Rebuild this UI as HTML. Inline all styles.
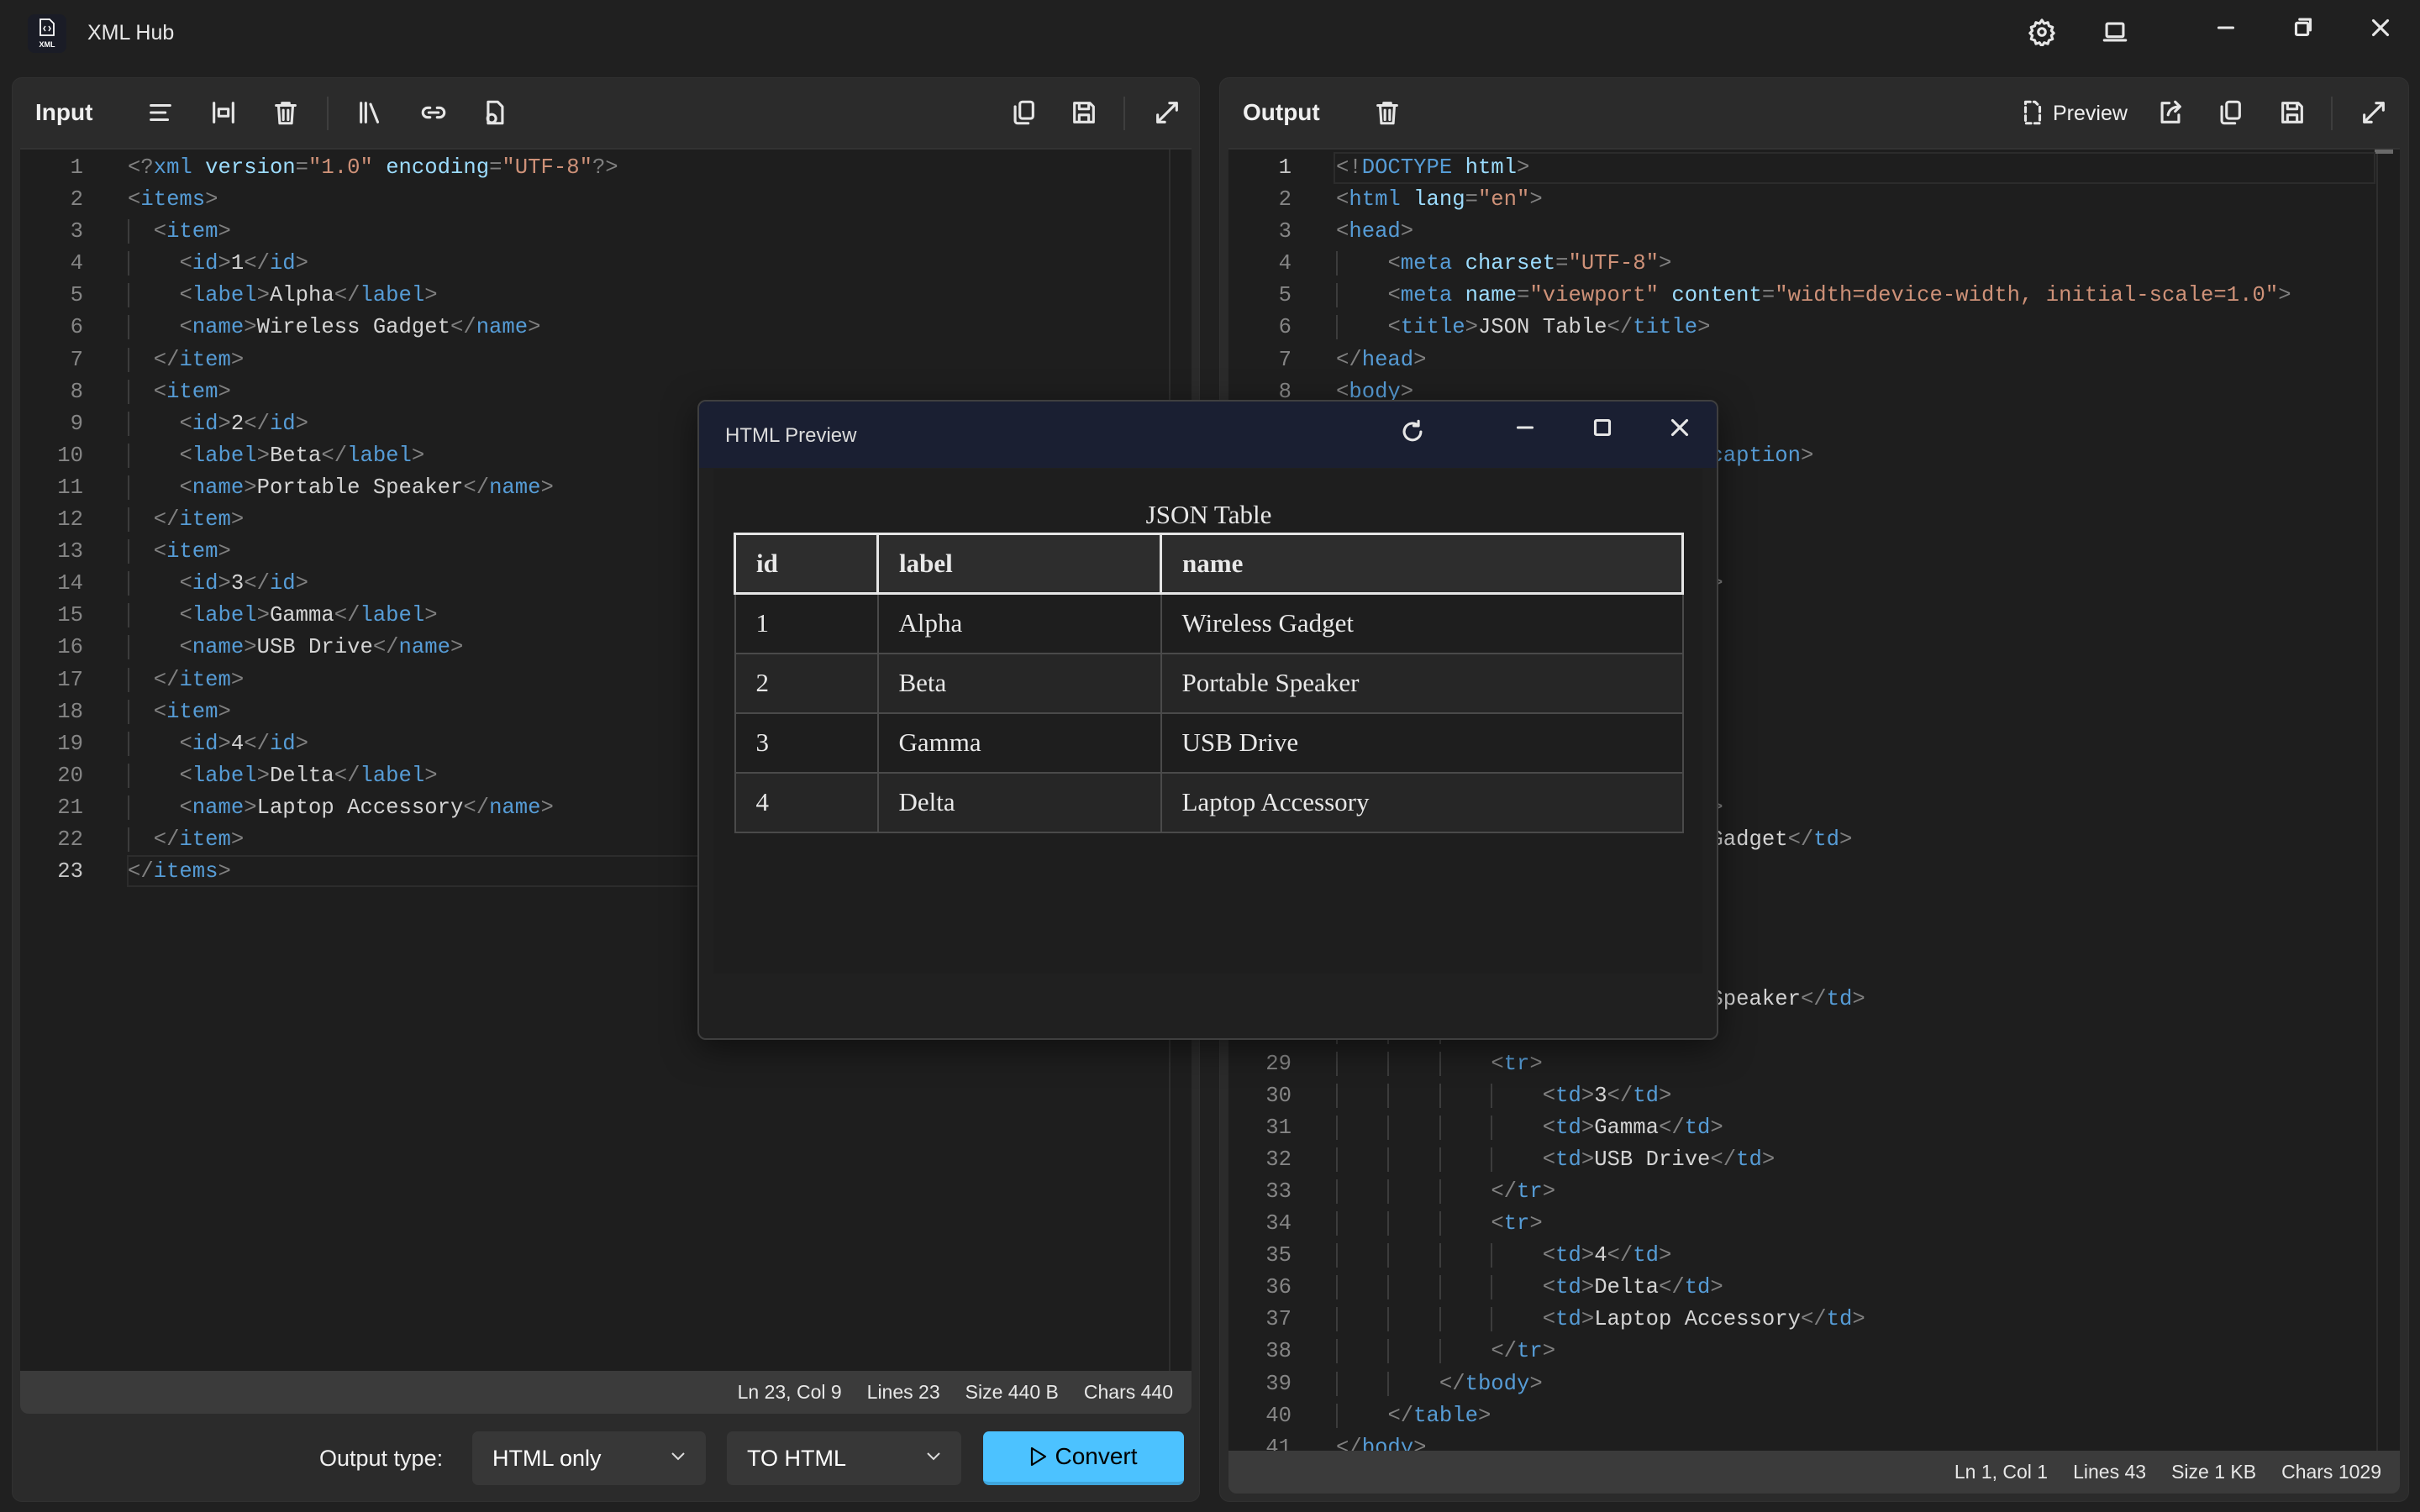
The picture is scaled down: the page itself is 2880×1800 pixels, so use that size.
<!DOCTYPE html>
<html><head><meta charset="utf-8">
<style>
*{box-sizing:border-box}
body{margin:0;width:2880px;height:1800px;background:#202020;overflow:hidden;font-family:"Liberation Sans",sans-serif;color:#e6e6e6;position:relative}
.abs{position:absolute}
.panel{position:absolute;background:#2b2b2b;border-radius:12px;border:1px solid #313131}
.ed{position:absolute;background:#1e1e1e;overflow:hidden;border-top:2px solid #333}
.code{position:absolute;top:3px;margin:0;font-family:"Liberation Mono",monospace;font-size:25.6px;line-height:38.1px;color:#d4d4d4;white-space:pre}
.ln{position:absolute;top:3px;margin:0;font-family:"Liberation Mono",monospace;font-size:25.6px;line-height:38.1px;color:#858585;text-align:right;white-space:pre}
i{font-style:normal;color:#808080}
u{text-decoration:none;color:#569cd6}
s{text-decoration:none;color:#9cdcfe}
em{font-style:normal;color:#ce9178}
g{box-shadow:inset 2px 0 0 #3c3c3c}
.status{position:absolute;background:#3b3b3b;font-size:23px;color:#e8e8e8;display:flex;justify-content:flex-end;align-items:center;gap:30px;padding-right:22px}
.ic{position:absolute;width:34px;height:34px;fill:none;stroke:#e6e6e6;stroke-width:2.2;stroke-linecap:round;stroke-linejoin:round}
.sep{position:absolute;width:2px;height:40px;background:#3e3e3e}
.dd{position:absolute;background:#373737;border-radius:7px;font-size:27px;color:#fff;padding-left:24px;display:flex;align-items:center}
.chev{position:absolute;right:24px;top:24px;width:18px;height:12px}
table{border-collapse:collapse;font-family:"Liberation Serif",serif;font-size:31px;color:#e8e8e8}
td,th{border:2px solid #4a4a4a;text-align:left;padding:0 0 0 24px;height:71px}
th{border:3px solid #e6e6e6;background:#2d2d2d}
tr.r2 td,tr.r4 td{background:#262626}
</style></head><body>

<div class="abs" style="left:33px;top:17px;width:46px;height:46px;background:#1a1c26;border-radius:8px"></div>
<svg class="abs" style="left:40px;top:20px" width="32" height="40" viewBox="0 0 32 40"><path d="M8 3h11l5 5v14H8z" fill="none" stroke="#fff" stroke-width="1.8"/><path d="M14 11l-2 3 2 3M18 11l2 3-2 3" fill="none" stroke="#fff" stroke-width="1.4"/><text x="16" y="36" fill="#fff" font-size="9" font-weight="bold" text-anchor="middle" font-family="Liberation Sans">XML</text></svg>
<div class="abs" style="left:104px;top:25px;font-size:25px;color:#e8e8e8">XML Hub</div>

<svg class="ic" style="left:2413px;top:21px" viewBox="0 0 24 24"><circle cx="12" cy="12" r="3"/><path d="M12 2l2 3 3-1 1 3 3 1-1 3 2 2-2 2 1 3-3 1-1 3-3-1-2 3-2-3-3 1-1-3-3-1 1-3-2-2 2-2-1-3 3-1 1-3 3 1z"/></svg>
<svg class="ic" style="left:2500px;top:21px" viewBox="0 0 24 24"><rect x="5" y="5" width="14" height="11" rx="1"/><path d="M3 19h18"/></svg>
<svg class="ic" style="left:2632px;top:16px" viewBox="0 0 24 24"><path d="M6 12h12"/></svg>
<svg class="ic" style="left:2724px;top:16px" viewBox="0 0 24 24"><rect x="6" y="8" width="10" height="10" rx="1"/><path d="M9 5h9v9"/></svg>
<svg class="ic" style="left:2816px;top:16px" viewBox="0 0 24 24"><path d="M6 6l12 12M18 6L6 18"/></svg>

<div class="panel" style="left:14px;top:92px;width:1414px;height:1696px"></div>
<div class="abs" style="left:42px;top:118px;font-size:28px;font-weight:600;color:#f0f0f0">Input</div>
<svg class="ic" style="left:174px;top:117px" viewBox="0 0 24 24"><path d="M4 6h16M4 12h12M4 18h14"/></svg>
<svg class="ic" style="left:249px;top:117px" viewBox="0 0 24 24"><path d="M4 4v16M20 4v16M8 9h8v6H8z"/></svg>
<svg class="ic" style="left:323px;top:117px" viewBox="0 0 24 24"><path d="M4 6h16M9 6V4h6v2M6 6l1 15h10l1-15M10 10v8M14 10v8"/></svg>
<div class="sep" style="left:389px;top:115px"></div>
<svg class="ic" style="left:424px;top:117px" viewBox="0 0 24 24"><path d="M4 4v16M8 4v16M12 5l6 15"/></svg>
<svg class="ic" style="left:499px;top:117px" viewBox="0 0 24 24"><path d="M9 8H7a4 4 0 000 8h2M15 8h2a4 4 0 010 8h-2M8 12h8"/></svg>
<svg class="ic" style="left:571px;top:117px" viewBox="0 0 24 24"><path d="M7 3h8l4 4v14H7z"/><circle cx="10" cy="17" r="3.5"/></svg>
<svg class="ic" style="left:1201px;top:117px" viewBox="0 0 24 24"><rect x="9" y="3" width="11" height="14" rx="2"/><path d="M5 7v12a2 2 0 002 2h9"/></svg>
<svg class="ic" style="left:1273px;top:117px" viewBox="0 0 24 24"><path d="M4 4h13l3 3v13H4zM8 4v5h8V4M8 20v-6h8v6"/></svg>
<div class="sep" style="left:1337px;top:115px"></div>
<svg class="ic" style="left:1372px;top:117px" viewBox="0 0 24 24"><path d="M14 4h6v6M20 4L4 20M4 14v6h6"/></svg>

<div class="ed" style="left:24px;top:176px;width:1394px;height:1456px">
<div class="abs" style="left:1367px;top:0;width:2px;height:1456px;background:#2e2e2e"></div>
<div class="abs" style="left:127px;top:840px;width:1240px;height:38px;border:2px solid #2c2c2c"></div>
<pre class="ln" style="left:0;width:75px">1
2
3
4
5
6
7
8
9
10
11
12
13
14
15
16
17
18
19
20
21
22
<span style="color:#c6c6c6">23</span></pre>
<pre class="code" style="left:128px"><i>&lt;?</i><u>xml</u> <s>version</s><i>=</i><em>"1.0"</em> <s>encoding</s><i>=</i><em>"UTF-8"</em><i>?&gt;</i>
<i>&lt;</i><u>items</u><i>&gt;</i>
<g>  </g><i>&lt;</i><u>item</u><i>&gt;</i>
<g>  </g>  <i>&lt;</i><u>id</u><i>&gt;</i>1<i>&lt;/</i><u>id</u><i>&gt;</i>
<g>  </g>  <i>&lt;</i><u>label</u><i>&gt;</i>Alpha<i>&lt;/</i><u>label</u><i>&gt;</i>
<g>  </g>  <i>&lt;</i><u>name</u><i>&gt;</i>Wireless Gadget<i>&lt;/</i><u>name</u><i>&gt;</i>
<g>  </g><i>&lt;/</i><u>item</u><i>&gt;</i>
<g>  </g><i>&lt;</i><u>item</u><i>&gt;</i>
<g>  </g>  <i>&lt;</i><u>id</u><i>&gt;</i>2<i>&lt;/</i><u>id</u><i>&gt;</i>
<g>  </g>  <i>&lt;</i><u>label</u><i>&gt;</i>Beta<i>&lt;/</i><u>label</u><i>&gt;</i>
<g>  </g>  <i>&lt;</i><u>name</u><i>&gt;</i>Portable Speaker<i>&lt;/</i><u>name</u><i>&gt;</i>
<g>  </g><i>&lt;/</i><u>item</u><i>&gt;</i>
<g>  </g><i>&lt;</i><u>item</u><i>&gt;</i>
<g>  </g>  <i>&lt;</i><u>id</u><i>&gt;</i>3<i>&lt;/</i><u>id</u><i>&gt;</i>
<g>  </g>  <i>&lt;</i><u>label</u><i>&gt;</i>Gamma<i>&lt;/</i><u>label</u><i>&gt;</i>
<g>  </g>  <i>&lt;</i><u>name</u><i>&gt;</i>USB Drive<i>&lt;/</i><u>name</u><i>&gt;</i>
<g>  </g><i>&lt;/</i><u>item</u><i>&gt;</i>
<g>  </g><i>&lt;</i><u>item</u><i>&gt;</i>
<g>  </g>  <i>&lt;</i><u>id</u><i>&gt;</i>4<i>&lt;/</i><u>id</u><i>&gt;</i>
<g>  </g>  <i>&lt;</i><u>label</u><i>&gt;</i>Delta<i>&lt;/</i><u>label</u><i>&gt;</i>
<g>  </g>  <i>&lt;</i><u>name</u><i>&gt;</i>Laptop Accessory<i>&lt;/</i><u>name</u><i>&gt;</i>
<g>  </g><i>&lt;/</i><u>item</u><i>&gt;</i>
<i>&lt;/</i><u>items</u><i>&gt;</i></pre>
</div>
<div class="status" style="left:24px;top:1632px;width:1394px;height:51px;border-radius:0 0 10px 10px"><span>Ln 23, Col 9</span><span>Lines 23</span><span>Size 440 B</span><span>Chars 440</span></div>

<div class="abs" style="left:380px;top:1721px;font-size:27px;color:#f0f0f0">Output type:</div>
<div class="dd" style="left:562px;top:1704px;width:278px;height:64px">HTML only<svg class="chev" viewBox="0 0 18 12"><path d="M2 2l7 7 7-7" fill="none" stroke="#ddd" stroke-width="2"/></svg></div>
<div class="dd" style="left:865px;top:1704px;width:279px;height:64px">TO HTML<svg class="chev" viewBox="0 0 18 12"><path d="M2 2l7 7 7-7" fill="none" stroke="#ddd" stroke-width="2"/></svg></div>
<div class="abs" style="left:1170px;top:1704px;width:239px;height:64px;background:#4cc2ff;border-radius:7px;border-bottom:4px solid #3fa6dd;display:flex;align-items:center;justify-content:center;font-size:28px;color:#000"><svg width="22" height="26" viewBox="0 0 22 26" style="margin-right:8px"><path d="M3 3l16 10L3 23z" fill="none" stroke="#000" stroke-width="2.2" stroke-linejoin="round"/></svg>Convert</div>

<div class="panel" style="left:1451px;top:92px;width:1416px;height:1696px"></div>
<div class="abs" style="left:1479px;top:118px;font-size:28px;font-weight:600;color:#f0f0f0">Output</div>
<svg class="ic" style="left:1634px;top:117px" viewBox="0 0 24 24"><path d="M4 6h16M9 6V4h6v2M6 6l1 15h10l1-15M10 10v8M14 10v8"/></svg>
<svg class="ic" style="left:2402px;top:117px" viewBox="0 0 24 24"><path d="M6 3h8l4 4v14H6z" stroke-dasharray="4 3"/></svg>
<div class="abs" style="left:2443px;top:121px;font-size:25px;color:#f0f0f0">Preview</div>
<svg class="ic" style="left:2566px;top:117px" viewBox="0 0 24 24"><path d="M11 4H5v16h14v-6M10 14c1-5 5-7 10-7M16 3l4 4-4 4"/></svg>
<svg class="ic" style="left:2637px;top:117px" viewBox="0 0 24 24"><rect x="9" y="3" width="11" height="14" rx="2"/><path d="M5 7v12a2 2 0 002 2h9"/></svg>
<svg class="ic" style="left:2711px;top:117px" viewBox="0 0 24 24"><path d="M4 4h13l3 3v13H4zM8 4v5h8V4M8 20v-6h8v6"/></svg>
<div class="sep" style="left:2774px;top:115px"></div>
<svg class="ic" style="left:2808px;top:117px" viewBox="0 0 24 24"><path d="M14 4h6v6M20 4L4 20M4 14v6h6"/></svg>

<div class="ed" style="left:1462px;top:176px;width:1394px;height:1551px">
<div class="abs" style="left:1366px;top:0;width:2px;height:1551px;background:#2e2e2e"></div>
<div class="abs" style="left:1364px;top:0;width:22px;height:5px;background:#6a6a6a"></div>
<div class="abs" style="left:125px;top:3px;width:1240px;height:38px;border:2px solid #2c2c2c"></div>
<pre class="ln" style="left:0;width:75px"><span style="color:#c6c6c6">1</span>
2
3
4
5
6
7
8
9
10
11
12
13
14
15
16
17
18
19
20
21
22
23
24
25
26
27
28
29
30
31
32
33
34
35
36
37
38
39
40
41
42
43</pre>
<pre class="code" style="left:128px"><i>&lt;!</i><u>DOCTYPE</u> <s>html</s><i>&gt;</i>
<i>&lt;</i><u>html</u> <s>lang</s><i>=</i><em>"en"</em><i>&gt;</i>
<i>&lt;</i><u>head</u><i>&gt;</i>
<g>    </g><i>&lt;</i><u>meta</u> <s>charset</s><i>=</i><em>"UTF-8"</em><i>&gt;</i>
<g>    </g><i>&lt;</i><u>meta</u> <s>name</s><i>=</i><em>"viewport"</em> <s>content</s><i>=</i><em>"width=device-width, initial-scale=1.0"</em><i>&gt;</i>
<g>    </g><i>&lt;</i><u>title</u><i>&gt;</i>JSON Table<i>&lt;/</i><u>title</u><i>&gt;</i>
<i>&lt;/</i><u>head</u><i>&gt;</i>
<i>&lt;</i><u>body</u><i>&gt;</i>
<g>    </g><i>&lt;</i><u>table</u><i>&gt;</i>
<g>    </g><g>    </g><i>&lt;</i><u>caption</u><i>&gt;</i>JSON Table<i>&lt;/</i><u>caption</u><i>&gt;</i>
<g>    </g><g>    </g><i>&lt;</i><u>thead</u><i>&gt;</i>
<g>    </g><g>    </g><g>    </g><i>&lt;</i><u>tr</u><i>&gt;</i>
<g>    </g><g>    </g><g>    </g><g>    </g><i>&lt;</i><u>th</u><i>&gt;</i>id<i>&lt;/</i><u>th</u><i>&gt;</i>
<g>    </g><g>    </g><g>    </g><g>    </g><i>&lt;</i><u>th</u><i>&gt;</i>label<i>&lt;/</i><u>th</u><i>&gt;</i>
<g>    </g><g>    </g><g>    </g><g>    </g><i>&lt;</i><u>th</u><i>&gt;</i>name<i>&lt;/</i><u>th</u><i>&gt;</i>
<g>    </g><g>    </g><g>    </g><i>&lt;/</i><u>tr</u><i>&gt;</i>
<g>    </g><g>    </g><i>&lt;/</i><u>thead</u><i>&gt;</i>
<g>    </g><g>    </g><i>&lt;</i><u>tbody</u><i>&gt;</i>
<g>    </g><g>    </g><g>    </g><i>&lt;</i><u>tr</u><i>&gt;</i>
<g>    </g><g>    </g><g>    </g><g>    </g><i>&lt;</i><u>td</u><i>&gt;</i>1<i>&lt;/</i><u>td</u><i>&gt;</i>
<g>    </g><g>    </g><g>    </g><g>    </g><i>&lt;</i><u>td</u><i>&gt;</i>Alpha<i>&lt;/</i><u>td</u><i>&gt;</i>
<g>    </g><g>    </g><g>    </g><g>    </g><i>&lt;</i><u>td</u><i>&gt;</i>Wireless Gadget<i>&lt;/</i><u>td</u><i>&gt;</i>
<g>    </g><g>    </g><g>    </g><i>&lt;/</i><u>tr</u><i>&gt;</i>
<g>    </g><g>    </g><g>    </g><i>&lt;</i><u>tr</u><i>&gt;</i>
<g>    </g><g>    </g><g>    </g><g>    </g><i>&lt;</i><u>td</u><i>&gt;</i>2<i>&lt;/</i><u>td</u><i>&gt;</i>
<g>    </g><g>    </g><g>    </g><g>    </g><i>&lt;</i><u>td</u><i>&gt;</i>Beta<i>&lt;/</i><u>td</u><i>&gt;</i>
<g>    </g><g>    </g><g>    </g><g>    </g><i>&lt;</i><u>td</u><i>&gt;</i>Portable Speaker<i>&lt;/</i><u>td</u><i>&gt;</i>
<g>    </g><g>    </g><g>    </g><i>&lt;/</i><u>tr</u><i>&gt;</i>
<g>    </g><g>    </g><g>    </g><i>&lt;</i><u>tr</u><i>&gt;</i>
<g>    </g><g>    </g><g>    </g><g>    </g><i>&lt;</i><u>td</u><i>&gt;</i>3<i>&lt;/</i><u>td</u><i>&gt;</i>
<g>    </g><g>    </g><g>    </g><g>    </g><i>&lt;</i><u>td</u><i>&gt;</i>Gamma<i>&lt;/</i><u>td</u><i>&gt;</i>
<g>    </g><g>    </g><g>    </g><g>    </g><i>&lt;</i><u>td</u><i>&gt;</i>USB Drive<i>&lt;/</i><u>td</u><i>&gt;</i>
<g>    </g><g>    </g><g>    </g><i>&lt;/</i><u>tr</u><i>&gt;</i>
<g>    </g><g>    </g><g>    </g><i>&lt;</i><u>tr</u><i>&gt;</i>
<g>    </g><g>    </g><g>    </g><g>    </g><i>&lt;</i><u>td</u><i>&gt;</i>4<i>&lt;/</i><u>td</u><i>&gt;</i>
<g>    </g><g>    </g><g>    </g><g>    </g><i>&lt;</i><u>td</u><i>&gt;</i>Delta<i>&lt;/</i><u>td</u><i>&gt;</i>
<g>    </g><g>    </g><g>    </g><g>    </g><i>&lt;</i><u>td</u><i>&gt;</i>Laptop Accessory<i>&lt;/</i><u>td</u><i>&gt;</i>
<g>    </g><g>    </g><g>    </g><i>&lt;/</i><u>tr</u><i>&gt;</i>
<g>    </g><g>    </g><i>&lt;/</i><u>tbody</u><i>&gt;</i>
<g>    </g><i>&lt;/</i><u>table</u><i>&gt;</i>
<i>&lt;/</i><u>body</u><i>&gt;</i>
<i>&lt;/</i><u>html</u><i>&gt;</i>
</pre>
</div>
<div class="status" style="left:1462px;top:1727px;width:1394px;height:51px;border-radius:0 0 10px 10px"><span>Ln 1, Col 1</span><span>Lines 43</span><span>Size 1 KB</span><span>Chars 1029</span></div>

<div class="abs" style="left:830px;top:476px;width:1215px;height:762px;background:#202020;border:2px solid #3f3f3f;border-radius:10px;overflow:hidden;box-shadow:0 10px 40px rgba(0,0,0,.5)">
  <div class="abs" style="left:0;top:0;width:100%;height:79px;background:#1a1f32"></div>
  <div class="abs" style="left:31px;top:27px;font-size:24px;color:#dcdcdc">HTML Preview</div>
  <svg class="ic" style="left:832px;top:19px" viewBox="0 0 24 24"><path d="M19 12a7 7 0 11-2-5M17 3v4h-4"/></svg>
  <svg class="ic" style="left:966px;top:14px" viewBox="0 0 24 24"><path d="M6 12h12"/></svg>
  <svg class="ic" style="left:1058px;top:14px" viewBox="0 0 24 24"><rect x="6" y="6" width="12" height="12" rx="1"/></svg>
  <svg class="ic" style="left:1150px;top:14px" viewBox="0 0 24 24"><path d="M6 6l12 12M18 6L6 18"/></svg>
  <div class="abs" style="left:17px;top:80px;width:1177px;height:601px;background:#1e1e1e"></div>
  <div class="abs" style="left:41px;top:117px;width:1131px;text-align:center;font-family:'Liberation Serif',serif;font-size:31px;color:#e8e8e8">JSON Table</div>
  <table class="abs" style="left:41px;top:156px;width:1131px">
    <tr><th style="width:170px">id</th><th style="width:337px">label</th><th>name</th></tr>
    <tr class="r1"><td>1</td><td>Alpha</td><td>Wireless Gadget</td></tr>
    <tr class="r2"><td>2</td><td>Beta</td><td>Portable Speaker</td></tr>
    <tr class="r3"><td>3</td><td>Gamma</td><td>USB Drive</td></tr>
    <tr class="r4"><td>4</td><td>Delta</td><td>Laptop Accessory</td></tr>
  </table>
</div>
</body></html>
